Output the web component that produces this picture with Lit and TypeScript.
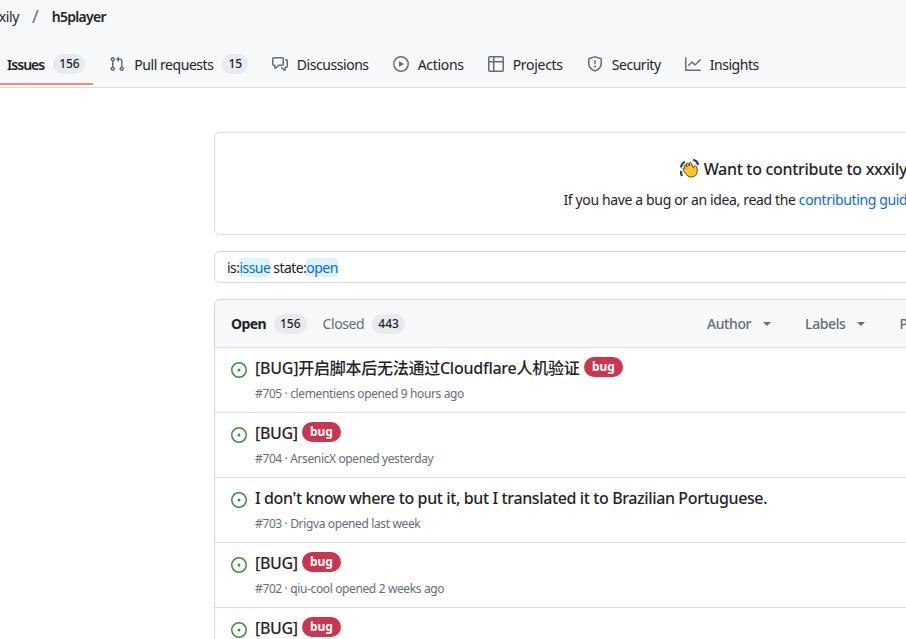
import { LitElement, html, css, svg } from "lit";
import { customElement } from "lit/decorators.js";

const ICONS: Record<string, string> = {
  issue: "M8 9.5a1.5 1.5 0 1 0 0-3 1.5 1.5 0 0 0 0 3ZM8 0a8 8 0 1 1 0 16A8 8 0 0 1 8 0ZM1.5 8a6.5 6.5 0 1 0 13 0 6.5 6.5 0 0 0-13 0Z",
  pr: "M1.5 3.25a2.25 2.25 0 1 1 3 2.122v5.256a2.251 2.251 0 1 1-1.5 0V5.372A2.25 2.25 0 0 1 1.5 3.25Zm5.677-.177L9.573.677A.25.25 0 0 1 10 .854V2.5h1A2.5 2.5 0 0 1 13.5 5v5.628a2.251 2.251 0 1 1-1.5 0V5a1 1 0 0 0-1-1h-1v1.646a.25.25 0 0 1-.427.177L7.177 3.427a.25.25 0 0 1 0-.354ZM3.75 2.5a.75.75 0 1 0 0 1.5.75.75 0 0 0 0-1.5Zm0 9.5a.75.75 0 1 0 0 1.5.75.75 0 0 0 0-1.5Zm8.25.75a.75.75 0 1 0 1.5 0 .75.75 0 0 0-1.5 0Z",
  discussion: "M1.75 1h8.5c.966 0 1.75.784 1.75 1.75v5.5A1.75 1.75 0 0 1 10.25 10H7.061l-2.574 2.573A1.458 1.458 0 0 1 2 11.543V10h-.25A1.75 1.75 0 0 1 0 8.25v-5.5C0 1.784.784 1 1.75 1ZM1.5 2.75v5.5c0 .138.112.25.25.25h1a.75.75 0 0 1 .75.75v2.19l2.72-2.72a.749.749 0 0 1 .53-.22h3.5a.25.25 0 0 0 .25-.25v-5.5a.25.25 0 0 0-.25-.25h-8.5a.25.25 0 0 0-.25.25Zm13 2a.25.25 0 0 0-.25-.25h-.5a.75.75 0 0 1 0-1.5h.5c.966 0 1.75.784 1.75 1.75v5.5A1.75 1.75 0 0 1 14.25 12H14v1.543a1.458 1.458 0 0 1-2.487 1.03L9.22 12.28a.749.749 0 0 1 .326-1.275.749.749 0 0 1 .734.215l2.22 2.22v-2.19a.75.75 0 0 1 .75-.75h1a.25.25 0 0 0 .25-.25Z",
  play: "M8 0a8 8 0 1 1 0 16A8 8 0 0 1 8 0ZM1.5 8a6.5 6.5 0 1 0 13 0 6.5 6.5 0 0 0-13 0Zm4.879-2.773 4.264 2.559a.25.25 0 0 1 0 .428l-4.264 2.559A.25.25 0 0 1 6 10.559V5.442a.25.25 0 0 1 .379-.215Z",
  table: "M0 1.75C0 .784.784 0 1.75 0h12.5C15.216 0 16 .784 16 1.75v12.5A1.75 1.75 0 0 1 14.25 16H1.75A1.75 1.75 0 0 1 0 14.25ZM6.5 6.5v8h7.75a.25.25 0 0 0 .25-.25V6.5Zm8-1.5V1.75a.25.25 0 0 0-.25-.25H6.5V5Zm-13 1.5v7.75c0 .138.112.25.25.25H5v-8ZM5 5V1.5H1.75a.25.25 0 0 0-.25.25V5Z",
  shield: "M7.467.133a1.748 1.748 0 0 1 1.066 0l5.25 1.68A1.75 1.75 0 0 1 15 3.48V7c0 1.566-.32 3.182-1.303 4.682-.983 1.498-2.585 2.813-5.032 3.855a1.697 1.697 0 0 1-1.33 0c-2.447-1.042-4.049-2.357-5.032-3.855C1.32 10.182 1 8.566 1 7V3.48a1.75 1.75 0 0 1 1.217-1.667Zm.61 1.429a.25.25 0 0 0-.153 0l-5.25 1.68a.25.25 0 0 0-.174.238V7c0 1.358.275 2.666 1.057 3.86.784 1.194 2.121 2.34 4.366 3.297a.196.196 0 0 0 .154 0c2.245-.956 3.582-2.104 4.366-3.298C13.225 9.666 13.5 8.36 13.5 7V3.48a.251.251 0 0 0-.174-.237l-5.25-1.68ZM8.75 4.75v3a.75.75 0 0 1-1.5 0v-3a.75.75 0 0 1 1.5 0ZM9 10.5a1 1 0 1 1-2 0 1 1 0 0 1 2 0Z",
  graph: "M1.5 1.75V13.5h13.75a.75.75 0 0 1 0 1.5H.75a.75.75 0 0 1-.75-.75V1.75a.75.75 0 0 1 1.5 0Zm14.28 2.53-5.25 5.25a.75.75 0 0 1-1.06 0L7 7.06 4.28 9.78a.751.751 0 0 1-1.042-.018.751.751 0 0 1-.018-1.042l3.25-3.25a.75.75 0 0 1 1.06 0L10 7.94l4.72-4.72a.751.751 0 0 1 1.042.018.751.751 0 0 1 .018 1.042Z",
};

const icon = (name: string, cls = "icon") => html`<svg class=${cls} viewBox="0 0 16 16" width="16" height="16" aria-hidden="true">${svg`<path fill-rule="evenodd" d=${ICONS[name]}></path>`}</svg>`;

const TABS = [
  { label: "Issues", icon: "issue", count: "156", cls: "selected" },
  { label: "Pull requests", icon: "pr", count: "15", cls: "" },
  { label: "Discussions", icon: "discussion", cls: "" },
  { label: "Actions", icon: "play", cls: "wide" },
  { label: "Projects", icon: "table", cls: "wide" },
  { label: "Security", icon: "shield", cls: "" },
  { label: "Insights", icon: "graph", cls: "" },
];

const ISSUES = [
  { title: "[BUG]开启脚本后无法通过Cloudflare人机验证", cjk: true, bug: true, meta: "#705 · clementiens opened 9 hours ago" },
  { title: "[BUG]", bug: true, meta: "#704 · ArsenicX opened yesterday" },
  { title: "I don't know where to put it, but I translated it to Brazilian Portuguese.", bug: false, meta: "#703 · Drigva opened last week" },
  { title: "[BUG]", bug: true, meta: "#702 · qiu-cool opened 2 weeks ago" },
  { title: "[BUG]", bug: true, meta: "" },
];

@customElement("app-root")
export class AppRoot extends LitElement {
  static styles = css`
    :host {
      display: block;
      width: 906px;
      height: 639px;
      overflow: hidden;
      background: #fff;
      color: #1f2328;
      font-family: "Noto Sans", "Noto Sans CJK SC", sans-serif;
      font-size: 14px;
    }
    .head {
      height: 85px;
      background: #f6f8fa;
      border-bottom: 1px solid #d8dee4;
      padding-bottom: 2px;
      display: flex;
      flex-direction: column;
    }
    .crumbs {
      display: flex;
      align-items: center;
      height: 32px;
      margin-left: -16px;
      white-space: nowrap;
    }
    .owner { width: 35px; text-align: right; letter-spacing: -0.4px; }
    .sep { color: #656d76; font-size: 18px; margin: 0 13px 0 13px; }
    .repo { font-weight: 600; letter-spacing: -0.7px; }
    .tabs { display: flex; gap: 8px; margin: 15px 0 0 -26px; height: 38px; white-space: nowrap; }
    .tab {
      position: relative;
      display: flex;
      align-items: center;
      gap: 9px;
      padding: 0 8px;
      height: 34px;
      letter-spacing: -0.45px;
      flex: none;
    }
    .tab.wide { letter-spacing: -0.3px; }
    .tab.selected { font-weight: 600; letter-spacing: -0.95px; }
    .tab.selected::after {
      content: "";
      position: absolute;
      left: 0;
      right: 0;
      top: 36px;
      height: 2px;
      background: #fd8c73;
    }
    .icon { fill: #656d76; flex: none; }
    .counter {
      display: inline-block;
      padding: 0 6px;
      line-height: 20px;
      font-size: 12px;
      font-weight: 500;
      border-radius: 10px;
      background: rgba(175, 184, 193, 0.2);
      text-align: center;
      letter-spacing: -0.2px;
    }
    .main { width: 1236px; margin: 44px 0 0 214px; display: flex; flex-direction: column; }
    .welcome {
      height: 103px;
      box-sizing: border-box;
      border: 1px solid #d8dee4;
      border-radius: 6px;
      text-align: center;
      padding-top: 24px;
    }
    .welcome h3 {
      margin: 0;
      font-size: 16px;
      font-weight: 550;
      line-height: 24px;
      letter-spacing: -0.3px;
      display: flex;
      justify-content: center;
      align-items: center;
      gap: 4px;
    }
    .welcome p { margin: 9px 0 0; line-height: 20px; letter-spacing: -0.36px; }
    a { color: #0969da; text-decoration: none; }
    .search {
      margin-top: 16px;
      height: 32px;
      box-sizing: border-box;
      border: 1px solid #d0d7de;
      border-radius: 6px;
      padding: 1px 12px 0;
      display: flex;
      align-items: center;
      white-space: pre;
      letter-spacing: -0.55px;
      color: #1f2328;
    }
    .tok { color: #0969da; background: #ddf4ff; border-radius: 3px; line-height: 19px; }
    .box {
      margin-top: 16px;
      border: 1px solid #d0d7de;
      border-radius: 6px 6px 0 0;
    }
    .box-head {
      height: 48px;
      box-sizing: border-box;
      background: #f6f8fa;
      border-bottom: 1px solid #d8dee4;
      border-radius: 6px 6px 0 0;
      display: flex;
      align-items: center;
      padding: 0 15px 0 16px;
      white-space: nowrap;
      letter-spacing: -0.4px;
    }
    .state { display: flex; align-items: center; gap: 8px; margin-right: 16px; color: #656d76; }
    .state.on { color: #1f2328; font-weight: 700; letter-spacing: -0.6px; }
    .state .counter { color: #1f2328; font-weight: 500; letter-spacing: 0; }
    .filters { display: flex; margin-left: 286px; gap: 34px; color: #656d76; font-weight: 500; }
    .filter { display: flex; align-items: center; gap: 12px; }
    .caret {
      width: 0;
      height: 0;
      border: 4px solid transparent;
      border-top-color: currentColor;
      border-bottom: 0;
    }
    .row {
      height: 65px;
      border-bottom: 1px solid #d8dee4;
      display: flex;
      gap: 8px;
      padding: 8px 16px 0;
      box-sizing: border-box;
    }
    .row .icon { fill: #3f8a4a; margin-top: 6px; }
    .title {
      display: flex;
      align-items: center;
      gap: 4px;
      font-size: 16px;
      font-weight: 550;
      line-height: 24px;
      letter-spacing: -0.38px;
      white-space: nowrap;
    }
    .title.cjk { letter-spacing: -0.25px; }
    .label {
      font-size: 12px;
      font-weight: 700;
      line-height: 20px;
      height: 20px;
      padding: 0 8.5px;
      margin-top: -2px;
      border-radius: 10px;
      color: #fff;
      background: #cb364f;
      letter-spacing: -0.1px;
    }
    .meta { margin-top: 5px; font-size: 12px; line-height: 18px; color: #656d76; letter-spacing: -0.37px; white-space: nowrap; }
  `;

  render() {
    return html`
      <header class="head">
        <div class="crumbs">
          <span class="owner">xxxily</span><span class="sep">/</span><span class="repo">h5player</span>
        </div>
        <nav class="tabs">
          ${TABS.map((t) => html`
            <div class="tab ${t.cls}">
              ${icon(t.icon)}<span>${t.label}</span>
              ${t.count ? html`<span class="counter">${t.count}</span>` : ""}
            </div>`)}
        </nav>
      </header>
      <main class="main">
        <section class="welcome">
          <h3>
            <svg width="20" height="20" viewBox="0 0 20 20" aria-hidden="true">
              <path d="M1 8.5 C1.5 5 3 3.5 5 3 M13 1 C15.5 1.2 17.5 3 18 6" stroke="#23465a" stroke-width="2.2" fill="none"></path>
              <path d="M2 17 C1 15 1 13 1.2 12" stroke="#23465a" stroke-width="2.2" fill="none"></path>
              <path d="M3.2 10.5 C2.6 9.4 4 8.4 4.9 9.4 L4.2 7.2 C3.9 6 5.5 5.4 6.2 6.5 L7 7.8 L6.3 5.4 C6 4.1 7.8 3.6 8.4 4.8 L9.6 7 L9.2 4.6 C9 3.3 10.8 3 11.3 4.2 L13.3 8.7 C13.5 7 15.8 6 16.6 7.6 C17.5 9.6 17.6 13 16.4 15.2 C14.8 18.2 10.8 18.8 8 17 C5.8 15.6 4.4 13 3.2 10.5 Z" fill="#f8c62a" stroke="#2a2412" stroke-width=".8" stroke-linejoin="round"></path>
            </svg>
            <span>Want to contribute to xxxily/h5player?</span>
          </h3>
          <p>If you have a bug or an idea, read the <a>contributing guidelines</a> before opening an issue.</p>
        </section>
        <div class="search">is:<span class="tok">issue</span> state:<span class="tok">open</span></div>
        <section class="box">
          <div class="box-head">
            <div class="state on">Open <span class="counter">156</span></div>
            <div class="state">Closed <span class="counter">443</span></div>
            <div class="filters">
              <div class="filter">Author <span class="caret"></span></div>
              <div class="filter">Labels <span class="caret"></span></div>
              <div class="filter">Projects <span class="caret"></span></div>
            </div>
          </div>
          ${ISSUES.map((i) => html`
            <div class="row">
              ${icon("issue")}
              <div>
                <div class="title ${i.cjk ? "cjk" : ""}"><span>${i.title}</span>${i.bug ? html`<span class="label">bug</span>` : ""}</div>
                <div class="meta">${i.meta}</div>
              </div>
            </div>`)}
        </section>
      </main>
    `;
  }
}
